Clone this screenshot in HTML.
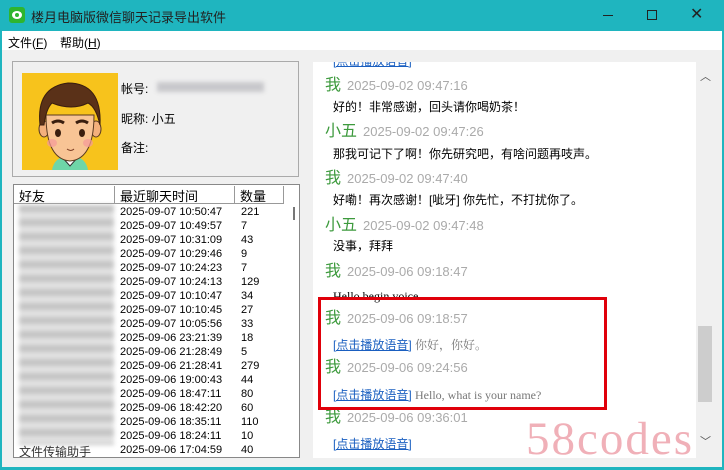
<!DOCTYPE html>
<html><head><meta charset="utf-8"><style>
*{margin:0;padding:0;box-sizing:border-box}
body{width:724px;height:470px;overflow:hidden;background:#1fb5bf;font-family:"Liberation Sans","Noto Sans CJK SC",sans-serif;font-size:12px;color:#000;position:relative}
.abs{position:absolute}
.win{left:2px;top:31px;width:720px;height:436px;background:#f0f0f0}
.menu{left:2px;top:31px;width:720px;height:19px;background:#fff;font-size:12px}
.menu span{position:absolute;top:3px}
.prof{left:12px;top:61px;width:287px;height:116px;border:1px solid #aaa;background:#f0f0f0}
.list{left:13px;top:184px;width:287px;height:274px;background:#fff;border:1px solid #888;overflow:hidden}
.hdr{left:0;top:0;width:270px;height:19px;background:#fff;border-bottom:1px solid #999;font-size:13px}
.hdr div{position:absolute;top:1px;height:18px;border-right:1px solid #999}
.row{position:absolute;left:0;width:280px;font-size:11px;height:14px;line-height:14px;white-space:nowrap}
.chat{left:313px;top:62px;width:383px;height:396px;background:#fff;overflow:hidden}
.n{position:absolute;left:12px;font-size:16px;color:#3d9a3d;line-height:20px}
.n b{font-weight:normal;color:#aaa;font-size:13px;margin-left:6px}
.m{position:absolute;left:20px;font-size:12px;line-height:16px;white-space:nowrap}
.lk{color:#1a5fc0;text-decoration:underline}
.gy{color:#777;font-family:"Liberation Serif","Noto Serif CJK SC",serif}
</style></head><body>
<div class="abs" style="left:9px;top:7px;width:16px;height:16px;background:#2eb52e;border-radius:3px"></div>
<div class="abs" style="left:12px;top:11px;width:10px;height:8px;background:#fff;border-radius:50%"></div>
<div class="abs" style="left:15px;top:13px;width:4px;height:4px;background:#2eb52e;border-radius:50%"></div>
<div class="abs" style="left:31px;top:7px;font-size:13px;color:#222">楼月电脑版微信聊天记录导出软件</div>
<div class="abs" style="left:603px;top:15px;width:10px;height:1px;background:#222"></div>
<div class="abs" style="left:647px;top:10px;width:10px;height:10px;border:1px solid #222"></div>
<div class="abs" style="left:690px;top:4px;font-size:16px;color:#222">✕</div>
<div class="abs win"></div>
<div class="abs menu"><span style="left:6px">文件(<u>F</u>)</span><span style="left:58px">帮助(<u>H</u>)</span></div>
<div class="abs prof"></div>
<svg class="abs" style="left:22px;top:73px" width="96" height="97" viewBox="0 0 96 97">
<rect width="96" height="97" fill="#f7c31c"/>
<path d="M30 97 Q32 84 48 82 Q64 84 66 97Z" fill="#6ed6a8"/>
<path d="M40 84 L48 93 L56 84" fill="#fff" stroke="#333"/>
<ellipse cx="22" cy="56" rx="5" ry="8" fill="#f3b07c" stroke="#5a3a20"/>
<ellipse cx="74" cy="56" rx="5" ry="8" fill="#f3b07c" stroke="#5a3a20"/>
<path d="M24 42 Q24 86 48 88 Q72 86 72 42Z" fill="#f8c495" stroke="#5a3a20"/>
<path d="M18 52 Q14 14 46 10 Q80 10 78 52 Q74 34 66 30 Q50 38 30 30 Q24 36 22 52Z" fill="#5a3118" stroke="#3a1e0e"/>
<ellipse cx="36" cy="60" rx="3" ry="4" fill="#3a1e0e"/><ellipse cx="60" cy="60" rx="3" ry="4" fill="#3a1e0e"/>
<path d="M30 50 Q36 46 42 50M54 50 Q60 46 66 50" stroke="#3a1e0e" stroke-width="3" fill="none"/>
<ellipse cx="30" cy="70" rx="5" ry="4" fill="#f59a9a" opacity=".7"/><ellipse cx="66" cy="70" rx="5" ry="4" fill="#f59a9a" opacity=".7"/>
<path d="M45 76 Q49 79 52 76" stroke="#7a3a20" fill="none"/>
</svg>
<div class="abs" style="left:121px;top:80px;font-size:12px">帐号:</div>
<div class="abs" style="left:157px;top:82px;width:107px;height:10px;background:#c8c8cc;filter:blur(2px)"></div>
<div class="abs" style="left:121px;top:110px;font-size:12px">昵称: 小五</div>
<div class="abs" style="left:121px;top:139px;font-size:12px">备注:</div>
<div class="abs list">
<div class="abs hdr"><div style="left:0;width:101px;padding-left:5px">好友</div><div style="left:101px;width:120px;padding-left:5px">最近聊天时间</div><div style="left:221px;width:49px;padding-left:5px">数量</div></div>
<div class="abs" style="left:279px;top:22px;width:2px;height:13px;background:#777"></div>
<div class="abs" style="left:5px;top:20px;width:95px;height:240px;background:repeating-linear-gradient(180deg,#bbb 0 7px,#ddd 7px 14px);filter:blur(2px);opacity:.85"></div>
<div class="abs" style="left:5px;top:258px;font-size:12px;color:#333">文件传输助手</div>
<div id="rows"></div>
</div>
<div class="abs chat">
<div class="m lk" style="top:-9px">[点击播放语音]</div>
<div class="n" style="top:14px">我<b>2025-09-02 09:47:16</b></div>
<div class="m" style="top:37px">好的！非常感谢，回头请你喝奶茶！</div>
<div class="n" style="top:60px">小五<b>2025-09-02 09:47:26</b></div>
<div class="m" style="top:84px">那我可记下了啊！你先研究吧，有啥问题再吱声。</div>
<div class="n" style="top:107px">我<b>2025-09-02 09:47:40</b></div>
<div class="m" style="top:130px">好嘞！再次感谢！[呲牙] 你先忙，不打扰你了。</div>
<div class="n" style="top:154px">小五<b>2025-09-02 09:47:48</b></div>
<div class="m" style="top:176px">没事，拜拜</div>
<div class="n" style="top:200px">我<b>2025-09-06 09:18:47</b></div>
<div class="m" style="top:226px;font-family:'Liberation Serif',serif">Hello begin voice</div>
<div class="n" style="top:247px">我<b>2025-09-06 09:18:57</b></div>
<div class="m" style="top:275px"><span class="lk">[点击播放语音]</span> <span class="gy">你好，你好。</span></div>
<div class="n" style="top:296px">我<b>2025-09-06 09:24:56</b></div>
<div class="m" style="top:325px"><span class="lk">[点击播放语音]</span> <span class="gy">Hello, what is your name?</span></div>
<div class="n" style="top:346px">我<b>2025-09-06 09:36:01</b></div>
<div class="m" style="top:374px"><span class="lk">[点击播放语音]</span></div>
</div>
<div class="abs" style="left:697px;top:62px;width:16px;height:396px;background:#f0f0f0"></div>
<div class="abs" style="left:698px;top:326px;width:14px;height:76px;background:#cdcdcd"></div>
<div class="abs" style="left:700px;top:68px;font-size:11px;color:#555">︿</div>
<div class="abs" style="left:700px;top:433px;font-size:11px;color:#555">﹀</div>
<div class="abs" style="left:318px;top:297px;width:289px;height:113px;border:3px solid #e0000a"></div>
<div class="abs" style="left:526px;top:412px;font-family:'Liberation Serif',serif;font-size:47px;color:#f0b0b8;letter-spacing:2px">58codes</div>
<script>
var d=[["10:50:47",221],["10:49:57",7],["10:31:09",43],["10:29:46",9],["10:24:23",7],["10:24:13",129],["10:10:47",34],["10:10:45",27],["10:05:56",33]],e=[["23:21:39",18],["21:28:49",5],["21:28:41",279],["19:00:43",44],["18:47:11",80],["18:42:20",60],["18:35:11",110],["18:24:11",10],["17:04:59",40]],h="";
d.forEach(function(r,i){h+='<div class="row" style="top:'+(20+i*14)+'px"><span style="position:absolute;left:106px">2025-09-07 '+r[0]+'</span><span style="position:absolute;left:227px">'+r[1]+'</span></div>'});
e.forEach(function(r,i){h+='<div class="row" style="top:'+(20+(i+9)*14)+'px"><span style="position:absolute;left:106px">2025-09-06 '+r[0]+'</span><span style="position:absolute;left:227px">'+r[1]+'</span></div>'});
document.getElementById("rows").innerHTML=h;
</script>
</body></html>
